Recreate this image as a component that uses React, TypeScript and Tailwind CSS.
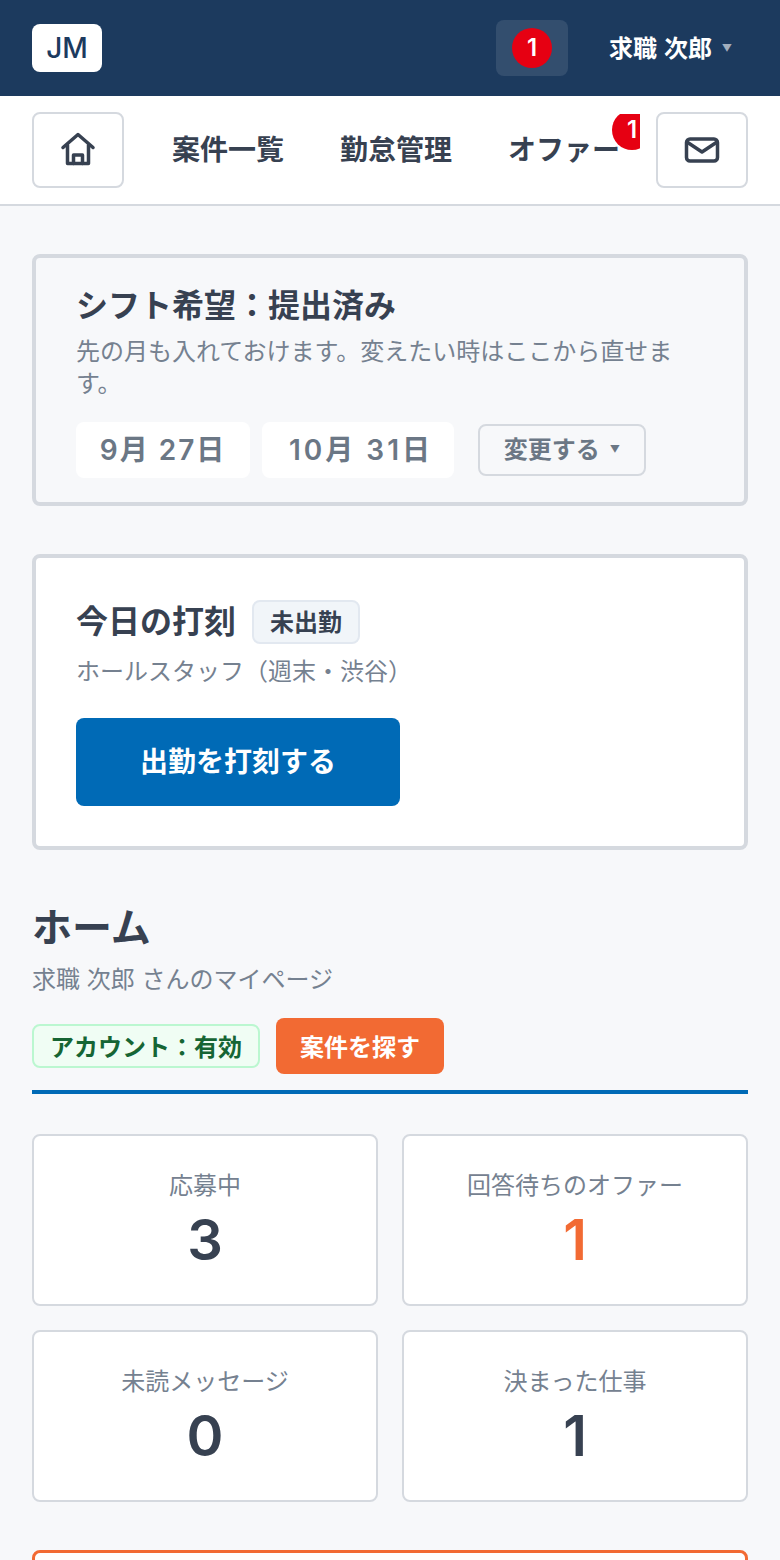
const stats = [
  { label: "応募中", value: "3", color: "text-[#374151]" },
  { label: "回答待ちのオファー", value: "1", color: "text-[#f26a33]" },
  { label: "未読メッセージ", value: "0", color: "text-[#374151]" },
  { label: "決まった仕事", value: "1", color: "text-[#374151]" },
];

const HomeIcon = () => (
  <svg width="40" height="40" viewBox="0 0 40 40" fill="none" stroke="#374151" strokeWidth="3.5" strokeLinecap="round" strokeLinejoin="round">
    <path d="M5 17.5 20 4.5l15 13" />
    <path d="M9.5 15v18.5h21V15" />
    <path d="M15.5 33.5V25h9v8.5" />
  </svg>
);

const MailIcon = () => (
  <svg width="40" height="40" viewBox="0 0 40 40" fill="none" stroke="#374151" strokeWidth="3.5" strokeLinecap="round" strokeLinejoin="round">
    <rect x="4.5" y="9" width="31" height="22" rx="3.5" />
    <path d="M5 12l15 10 15-10" />
  </svg>
);

const App = () => {
  return (
    <div className="w-[780px] h-[1560px] overflow-hidden bg-[#f7f8fa] font-['Inter','Noto_Sans_CJK_JP',sans-serif] text-[#374151]">
      <header className="h-24 bg-[#1c3a5e] flex items-center pl-8 pr-[48px]">
        <div className="w-[70px] h-12 bg-white rounded-lg flex items-center justify-center text-[28px] font-medium text-[#1c3a5e]">
          JM
        </div>
        <div className="ml-auto w-[72px] h-14 rounded-lg bg-white/10 flex items-center justify-center">
          <span className="w-10 h-10 rounded-full bg-[#e60012] text-white text-2xl font-semibold flex items-center justify-center">
            1
          </span>
        </div>
        <div className="ml-[41px] w-[123px] pt-[2px] flex items-center justify-between text-white text-2xl font-semibold [word-spacing:1px]">
          <span>求職 次郎</span>
          <span className="text-[10px] text-white/60">▼</span>
        </div>
      </header>

      <nav className="h-[110px] bg-white border-b-2 border-[#d5d9df] flex items-start gap-4 pl-8 pr-8 pt-4">
        <button className="w-[92px] h-[76px] shrink-0 rounded-lg border-2 border-[#d5d9df] flex items-center justify-center">
          <HomeIcon />
        </button>
        <div className="w-[500px] h-[72px] mt-[2px] overflow-hidden flex items-center gap-14 pl-8 text-[28px] font-semibold">
          <span className="shrink-0">案件一覧</span>
          <span className="shrink-0">勤怠管理</span>
          <span className="shrink-0 relative">
            オファー
            <span className="absolute -top-[19px] -right-[32px] w-10 h-10 rounded-full bg-[#e60012] text-white text-2xl flex items-center justify-center">
              1
            </span>
          </span>
        </div>
        <button className="w-[92px] h-[76px] shrink-0 rounded-lg border-2 border-[#d5d9df] flex items-center justify-center">
          <MailIcon />
        </button>
      </nav>

      <main className="px-8 pt-12">
        <section className="h-[252px] rounded-lg border-4 border-[#d5d9df] px-10 pt-[26px]">
          <h2 className="text-[32px] leading-[44px] font-bold">シフト希望：提出済み</h2>
          <p className="mt-2 text-2xl leading-8 text-[#758190]">
            先の月も入れておけます。変えたい時はここから直せます。
          </p>
          <div className="mt-[22px] flex items-center">
            <span className="w-[174px] h-14 bg-white rounded-lg flex items-center justify-center text-[28px] font-semibold tracking-[2px] text-[#6b7785]">
              9月 27日
            </span>
            <span className="ml-3 w-[192px] h-14 pl-[6px] bg-white rounded-lg flex items-center justify-center text-[28px] font-semibold tracking-[3px] text-[#6b7785]">
              10月 31日
            </span>
            <button className="ml-6 w-[168px] h-[52px] rounded-lg border-2 border-[#d5d9df] flex items-center justify-center gap-[10px] text-2xl font-semibold text-[#6b7785]">
              変更する
              <span className="text-[10px]">▼</span>
            </button>
          </div>
        </section>

        <section className="mt-12 h-[296px] rounded-lg border-4 border-[#d5d9df] bg-white px-10 pt-[42px]">
          <div className="flex items-center gap-4">
            <h2 className="text-[32px] leading-[44px] font-bold">今日の打刻</h2>
            <span className="w-[108px] h-11 pt-[2px] rounded-lg border-2 border-[#e2e8f0] bg-[#f1f5f9] flex items-center justify-center text-2xl font-semibold">
              未出勤
            </span>
          </div>
          <p className="mt-[10px] text-2xl leading-9 text-[#758190]">ホールスタッフ（週末・渋谷）</p>
          <button className="mt-[28px] w-[324px] h-[88px] rounded-lg bg-[#006ab6] text-white text-[28px] font-semibold">
            出勤を打刻する
          </button>
        </section>

        <section className="mt-[50px]">
          <h1 className="text-[40px] leading-[56px] font-bold">ホーム</h1>
          <p className="mt-[6px] text-2xl leading-9 text-[#758190]">求職 次郎 さんのマイページ</p>
          <div className="mt-[20px] flex items-center gap-4">
            <span className="w-[228px] h-11 pt-[4px] rounded-lg border-2 border-[#bbf7d0] bg-[#f0fdf4] flex items-center justify-center text-2xl font-semibold text-[#166534]">
              アカウント：有効
            </span>
            <button className="w-[168px] h-14 pt-[4px] rounded-lg bg-[#f26a33] text-white text-2xl font-semibold">
              案件を探す
            </button>
          </div>
          <div className="mt-4 h-1 bg-[#006ab6]" />
        </section>

        <section className="mt-10 grid grid-cols-2 gap-6">
          {stats.map((s) => (
            <div
              key={s.label}
              className="h-[172px] rounded-lg border-2 border-[#d5d9df] bg-white flex flex-col items-center pt-[32px]"
            >
              <span className="text-2xl leading-9 text-[#758190]">{s.label}</span>
              <span className={`mt-[2px] text-[56px] leading-[68px] font-semibold ${s.color}`}>{s.value}</span>
            </div>
          ))}
        </section>

        <section className="mt-12 h-40 rounded-lg border-[3px] border-[#f26a33] bg-white" />
      </main>
    </div>
  );
};

export default App;
